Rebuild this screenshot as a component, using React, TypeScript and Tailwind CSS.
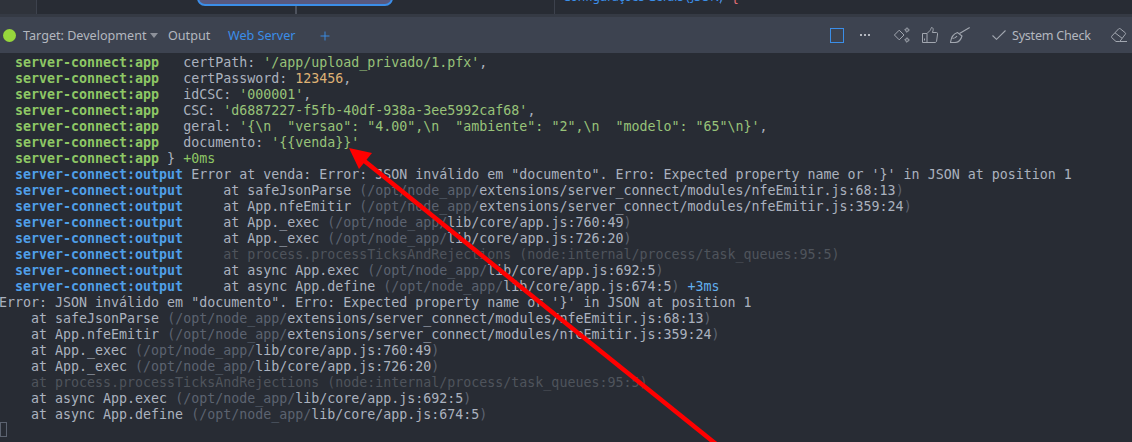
import React from "react";
import { Plus } from "lucide-react";

type Seg = [string, string?];

const TEXT = "text-[#abb2bf]";
const STR = "text-[#98c379]";
const DIM = "text-[#4f545c]";
const MUTED = "text-[#5c6370]";

const appRows: Seg[][] = [
  [["   certPath: "], ["'/app/upload_privado/1.pfx'", STR], [","]],
  [["   certPassword: "], ["123456", "text-[#dfb274]"], [","]],
  [["   idCSC: "], ["'000001'", STR], [","]],
  [["   CSC: "], ["'d6887227-f5fb-40df-938a-3ee5992caf68'", STR], [","]],
  [["   geral: "], ["'{\\n  \"versao\": \"4.00\",\\n  \"ambiente\": \"2\",\\n  \"modelo\": \"65\"\\n}'", STR], [","]],
  [["   documento: "], ["'{{venda}}'", STR]],
];

const trace = (indent: string, plusMs?: string): Seg[][] => {
  const row = (fn: string, bright: string, end: string): Seg[] => [
    [indent + "at " + fn + " "],
    ["(/opt/node_app/", MUTED],
    [bright],
    [")", MUTED],
    ...(end ? ([[end, "text-[#61afef]"]] as Seg[]) : []),
  ];
  return [
    row("safeJsonParse", "extensions/server_connect/modules/nfeEmitir.js:68:13", ""),
    row("App.nfeEmitir", "extensions/server_connect/modules/nfeEmitir.js:359:24", ""),
    row("App._exec", "lib/core/app.js:760:49", ""),
    row("App._exec", "lib/core/app.js:726:20", ""),
    [[indent + "at process.processTicksAndRejections (node:internal/process/task_queues:95:5)", DIM]],
    row("async App.exec", "lib/core/app.js:692:5", ""),
    row("async App.define", "lib/core/app.js:674:5", plusMs ?? ""),
  ];
};

const errorMsg = "Error: JSON inválido em \"documento\". Erro: Expected property name or '}' in JSON at position 1";

function Line({ prefix, color, segs }: { prefix?: string; color?: string; segs: Seg[] }) {
  return (
    <div className="h-4 leading-4 whitespace-pre">
      {prefix && <span className={`font-bold ${color}`}>{"  " + prefix}</span>}
      {segs.map((s, i) => (
        <span key={i} className={s[1] ?? TEXT}>
          {s[0]}
        </span>
      ))}
    </div>
  );
}

function SparkleIcon() {
  return (
    <svg width="16" height="16" viewBox="0 0 16 16" fill="none" stroke="#a2a7b0" strokeWidth="1">
      <path d="M5.2 3.2 L10 8 L5.2 12.8 L0.4 8 Z" />
      <path d="M13 0.7 L15.3 3 L13 5.3 L10.7 3 Z" fill="#a2a7b0" fillOpacity="0.35" />
      <path d="M13 10.7 L15.3 13 L13 15.3 L10.7 13 Z" fill="#a2a7b0" fillOpacity="0.35" />
    </svg>
  );
}

function ThumbIcon() {
  return (
    <svg width="16" height="16" viewBox="0 0 16 16" fill="none" stroke="#a2a7b0" strokeWidth="1">
      <path d="M0.5 6.5 H5 V15.5 H0.5 Z" />
      <path d="M2.5 11.5 V13.5" />
      <path d="M5 6.5 L8 3.5 C9 2.3 9 1 9.5 0.5 C11 0.5 11.5 2 11 3.8 L10.4 5.5 H14.5 C15.2 5.5 15.7 6 15.6 6.8 L14.6 14 C14.4 15 13.8 15.5 13 15.5 H5" />
    </svg>
  );
}

function BroomIcon() {
  return (
    <svg width="20" height="16" viewBox="0 0 20 16" fill="none" stroke="#a2a7b0" strokeWidth="1.1">
      <path d="M0.5 15.5 C1 11 3 7 7.5 5.5 L12 9 C11 12.5 8.5 15.5 5 15.5 Z" />
      <path d="M2.5 11.5 C4.5 11.5 6 10.5 7 9" />
      <path d="M9.5 6.5 L19.7 0.5" />
    </svg>
  );
}

function CheckIcon() {
  return (
    <svg width="14" height="10" viewBox="0 0 14 10" fill="none" stroke="#a2a7b0" strokeWidth="1.1">
      <path d="M0.5 5.5 L4.5 9.3 L13.5 0.5" />
    </svg>
  );
}

function EraserIcon() {
  return (
    <svg width="16" height="14" viewBox="0 0 16 14" fill="none" stroke="#a2a7b0" strokeWidth="1">
      <path d="M0.7 8.2 L7.8 0.7 C8.2 0.4 8.8 0.4 9.2 0.7 L14.3 4.8 C14.7 5.2 14.7 5.8 14.3 6.2 L8.8 13.5 H5 L0.7 9.6 C0.4 9.2 0.4 8.6 0.7 8.2 Z" />
      <path d="M4 4.8 L11 10.2" />
      <path d="M8.8 13.5 H16" />
    </svg>
  );
}

export default function App() {
  const green = "text-[#8ec765]";
  const blue = "text-[#4f9fe8]";

  return (
    <div className="relative w-[1132px] h-[442px] overflow-hidden bg-[#282c34]">
      {/* editor strip above the panel, cut off by the crop */}
      <div className="flex h-[14px] bg-[#282c34] overflow-hidden">
        <div className="w-[37px] h-full bg-[#2f333b] border-r border-[#3d424d]" />
        <div className="relative w-[518px] h-full border-r border-[#3d424d]">
          <div className="absolute left-[160px] -top-[10px] w-[196px] h-[16px] rounded-b-[8px] border-2 border-[#3b8ee8] bg-[#58597f]" />
          <div className="absolute left-[258px] top-[6px] w-[2px] h-[8px] bg-[#4d525d]" />
        </div>
        <div className="w-[166px] h-full border-r border-[#4d525d] pl-[8px] -mt-[10px] text-[12px] leading-[14px] text-[#3b8ee8] whitespace-nowrap font-['Noto_Sans',sans-serif]">
          Configurações Gerais (JSON)
        </div>
        <div className="pl-[10px] -mt-[10px] font-['DejaVu_Sans_Mono',monospace] text-[13px] leading-[16px] text-[#e06c75]">{"{"}</div>
      </div>
      <div className="h-[3px] bg-[#353a44]" />

      {/* toolbar */}
      <div className="flex items-center h-[36px] bg-[#3d4350] pl-[3px] text-[12.6px] text-[#b3b7bf] font-['Noto_Sans',sans-serif]">
        <span className="w-[13px] h-[13px] rounded-full bg-[#97d73c] shrink-0" />
        <span className="ml-[7px] mt-[3px] w-[120px] whitespace-nowrap">Target: Development</span>
        <span className="ml-[7px] w-0 h-0 shrink-0 border-x-[4px] border-x-transparent border-t-[5px] border-t-[#8d919a]" />
        <span className="ml-[10px] mt-[3px] w-[42px]">Output</span>
        <span className="ml-[18px] mt-[3px] w-[66px] whitespace-nowrap text-[#3b8ee8]">Web Server</span>
        <Plus size={14} strokeWidth={1.6} className="ml-[24px] mt-[1px] text-[#3b8ee8]" />

        <span className="ml-[498px] w-[14px] h-[15px] shrink-0 border border-[#3b8ee8]" />
        <span className="ml-[16px] w-[10px] flex gap-[2px]">
          <span className="w-[2px] h-[2px] bg-[#b3b7bf]" />
          <span className="w-[2px] h-[2px] bg-[#b3b7bf]" />
          <span className="w-[2px] h-[2px] bg-[#b3b7bf]" />
        </span>
        <span className="ml-[24px] flex items-center gap-[12px]">
          <SparkleIcon />
          <ThumbIcon />
          <BroomIcon />
        </span>
        <span className="ml-[22px]">
          <CheckIcon />
        </span>
        <span className="ml-[6px] mt-[3px] w-[79px] whitespace-nowrap tracking-[-0.25px]">System Check</span>
        <span className="ml-[20px]">
          <EraserIcon />
        </span>
      </div>

      {/* terminal output */}
      <div className="pt-[2px] font-['DejaVu_Sans_Mono',monospace] text-[13.3px] -ml-px">
        {appRows.map((segs, i) => (
          <Line key={i} prefix="server-connect:app" color={green} segs={segs} />
        ))}
        <Line prefix="server-connect:app" color={green} segs={[[" } "], ["+0ms", green]]} />
        <Line prefix="server-connect:output" color={blue} segs={[[" Error at venda: " + errorMsg]]} />
        {trace("     ", " +3ms").map((segs, i) => (
          <Line key={i} prefix="server-connect:output" color={blue} segs={segs} />
        ))}
        <Line segs={[[errorMsg]]} />
        {trace("    ").map((segs, i) => (
          <Line key={i} segs={segs} />
        ))}
        <div className="ml-px -mt-px w-[7px] h-[15px] border border-[#5c6370]" />
      </div>

      {/* annotation arrow drawn on top of the screenshot */}
      <svg className="absolute inset-0 pointer-events-none" width="1132" height="442" viewBox="0 0 1132 442">
        <line x1="716" y1="444" x2="362" y2="159" stroke="#ff0000" strokeWidth="4.5" />
        <path d="M349 148 L372 153 L359 169 Z" fill="#ff0000" />
      </svg>
    </div>
  );
}
